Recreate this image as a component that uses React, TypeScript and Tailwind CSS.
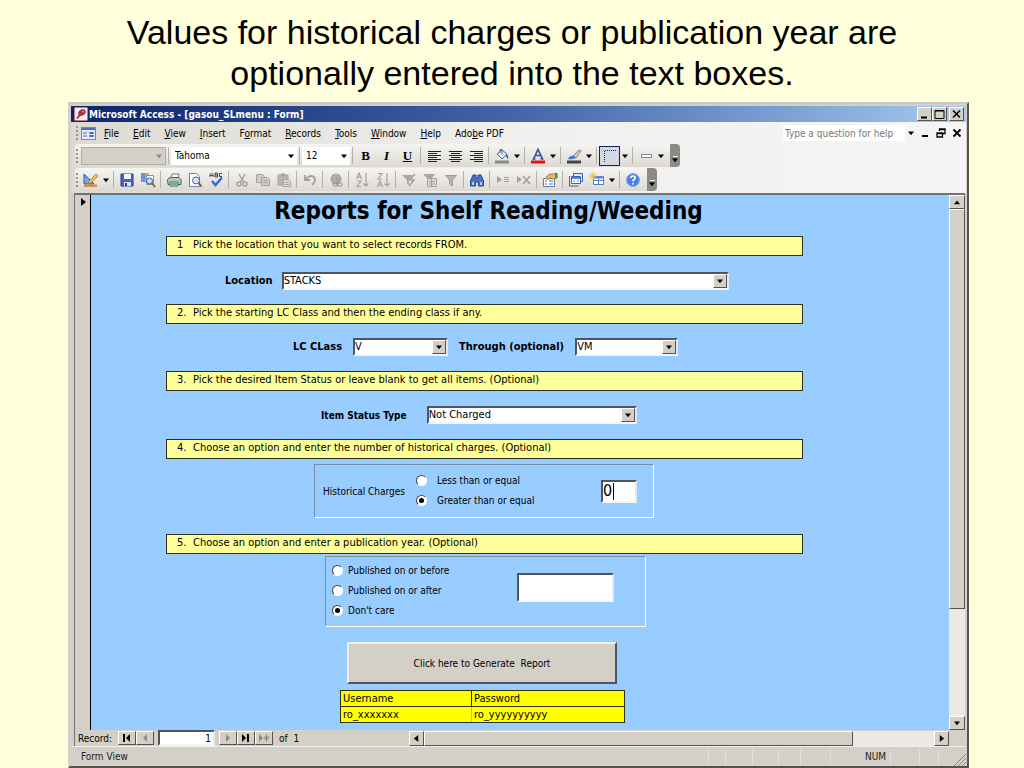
import type { ReactNode } from 'react';
import clsx from 'clsx';

const MENUS = [
  ['', 'F', 'ile'],
  ['', 'E', 'dit'],
  ['', 'V', 'iew'],
  ['', 'I', 'nsert'],
  ['F', 'o', 'rmat'],
  ['', 'R', 'ecords'],
  ['', 'T', 'ools'],
  ['', 'W', 'indow'],
  ['', 'H', 'elp'],
  ['Ado', 'b', 'e PDF'],
];

const RAISED = 'border border-t-white border-l-white border-r-[#55534e] border-b-[#55534e] bg-[#d4d0c8]';
const SUNKEN = 'border-2 border-t-[#4c5560] border-l-[#4c5560] border-r-[#e4e8ee] border-b-[#f4f6f8] bg-white';
const TRACK = 'bg-[#ebe9e4]';

function App() {
  return (
    <div className="min-h-screen bg-[#ffffdb] font-['DejaVu_Sans_Condensed','DejaVu_Sans',sans-serif] text-[10px] text-black">
      <h1 className="px-16 pt-3 pb-2 text-center font-['Liberation_Sans',sans-serif] text-[34px] leading-[41px]">
        Values for historical charges or publication year are
        <br />
        optionally entered into the text boxes.
      </h1>
      <div className="ml-[68px] mr-[55px] border-2 border-t-[#c9c9c4] border-l-[#d4d0c8] border-r-[#55534e] border-b-[#55534e] bg-[#d4d0c8] px-px pt-0.5">
        <TitleBar />
        <div className="bg-linear-to-r from-[#dddad3] via-[#f1f0ee] to-[#f5f5f5] pr-px pb-px pl-1">
          <MenuBar />
          <FormattingBar />
          <StandardBar />
        </div>
        <div className="ml-[3px] mr-px border-t-2 border-l border-[#6e7378]">
          <div className="flex">
            <div className="flex w-4 shrink-0 justify-center border-r border-black bg-[#d4d0c8] pt-[3px]">
              <Triangle dir="right" size={8} />
            </div>
            <ReportForm />
            <VerticalScroll />
          </div>
          <RecordBar />
        </div>
        <StatusBar />
      </div>
    </div>
  );
}

function Triangle({ dir, size = 6, color = '#000' }: { dir: 'up' | 'down' | 'left' | 'right'; size?: number; color?: string }) {
  const points = {
    up: '0,7 8,7 4,2',
    down: '0,2 8,2 4,7',
    left: '6,0 6,8 1,4',
    right: '2,0 2,8 7,4',
  }[dir];
  return (
    <svg width={size} height={size} viewBox="0 0 8 8" className="shrink-0">
      <polygon points={points} fill={color} />
    </svg>
  );
}

function TitleBar() {
  return (
    <div className="flex h-4 items-center bg-linear-to-r from-[#0a246a] via-[#4565a8] to-[#a6caf0] pr-0.5 pl-[3px]">
      <svg width="14" height="14" viewBox="0 0 14 14">
        <rect x="0.5" y="0.5" width="13" height="13" rx="1" fill="#f8e8ec" stroke="#b87888" />
        <ellipse cx="8" cy="5.500" rx="4" ry="3" transform="rotate(-35 8 5.500)" fill="#a83048" />
        <circle cx="9" cy="4.500" r="1" fill="#d88898" />
        <path d="M6.500 7 3 11.500" stroke="#a83048" strokeWidth="2" />
      </svg>
      <span className="ml-px grow text-[10px] font-bold text-white">Microsoft Access - [gasou_SLmenu : Form]</span>
      <WindowButton label="Minimize"><path d="M3 9.500h6" strokeWidth="2" /></WindowButton>
      <WindowButton label="Maximize"><path d="M2 2.500h9v8H2zM2 3h9" /></WindowButton>
      <WindowButton label="Close"><path d="m3 2.500 7 7m0-7-7 7" strokeWidth="1.600" /></WindowButton>
    </div>
  );
}

function WindowButton({ label, children }: { label: string; children: ReactNode }) {
  return (
    <button aria-label={label} className={clsx(RAISED, 'flex h-[14px] w-[15px] items-center justify-center last:ml-0.5')}>
      <svg width="13" height="12" viewBox="0 0 13 12" fill="none" stroke="#000">{children}</svg>
    </button>
  );
}

function MenuBar() {
  return (
    <div className="flex h-[22px] items-center">
      <Grip />
      <svg width="15" height="13" viewBox="0 0 15 13" className="mr-px ml-px">
        <rect x="0.5" y="0.5" width="14" height="12" fill="#e4ecfa" stroke="#6a86c4" />
        <path d="M1 1h13v2H1z" fill="#4a6cc0" />
        <path d="M2 6h4M2 9h4" stroke="#4a6cc0" />
        <path d="M8.500 5.500h4v1h-4zM8.500 8.500h4v1h-4z" fill="#fff" stroke="#4a6cc0" />
      </svg>
      {MENUS.map(([before, key, after]) => (
        <button key={key} className="px-[7px] whitespace-pre">
          {before}<span className="underline">{key}</span>{after}
        </button>
      ))}
      <span className="grow" />
      <input
        aria-label="Type a question for help"
        placeholder="Type a question for help"
        className="h-4 w-[122px] bg-white pl-0.5 placeholder:text-[#777]"
      />
      <span className="flex w-3 justify-center"><Triangle dir="down" /></span>
      <ChildButton label="Minimize form"><path d="M3 9h6" strokeWidth="2" /></ChildButton>
      <ChildButton label="Restore form"><path d="M4.500 4V2h5.500v4.500H8M4 2.500h6.500M2 6h5.500v4H2zM1.500 6.500h6.500" strokeWidth="1.300" /></ChildButton>
      <ChildButton label="Close form"><path d="m2.500 2.500 7 7m0-7-7 7" strokeWidth="1.800" /></ChildButton>
    </div>
  );
}

function ChildButton({ label, children }: { label: string; children: ReactNode }) {
  return (
    <button aria-label={label} className="flex w-4 justify-center">
      <svg width="12" height="12" viewBox="0 0 12 12" fill="none" stroke="#000">{children}</svg>
    </button>
  );
}

function Grip() {
  return (
    <svg width="5" height="16" viewBox="0 0 5 16" className="shrink-0">
      <path d="M2 1v14" stroke="#98958e" strokeWidth="2" strokeDasharray="2 2" />
    </svg>
  );
}

function Sep() {
  return (
    <span className="flex w-[5px] shrink-0 justify-center">
      <span className="h-[17px] w-px bg-[#b4b1aa]" />
    </span>
  );
}

function Drop({ label }: { label: string }) {
  return (
    <button aria-label={label} className="flex w-[10px] shrink-0 justify-center">
      <Triangle dir="down" />
    </button>
  );
}

function Tool({ label, pressed, children }: { label: string; pressed?: boolean; children: ReactNode }) {
  return (
    <button
      aria-label={label}
      className={clsx('flex h-5 w-[21px] shrink-0 items-center justify-center', pressed && 'border border-[#0a246a] bg-[#d3d8e4]')}
    >
      <svg width="16" height="16" viewBox="0 0 16 16" fill="none">{children}</svg>
    </button>
  );
}

function BarEnd() {
  return (
    <button aria-label="Toolbar options" className="ml-1 flex h-[23px] w-[10px] flex-col items-center justify-end rounded-r-sm bg-[#8c8a86] pb-1">
      <span className="h-px w-[5px] bg-white" />
      <Triangle dir="down" />
    </button>
  );
}

function BarSelect({ label, value, className }: { label: string; value: string; className: string }) {
  return (
    <div className={clsx('relative flex h-[18px] shrink-0', className)}>
      <select aria-label={label} disabled={!value} className="w-full appearance-none bg-transparent pl-1 opacity-100">
        <option>{value}</option>
      </select>
      <span className="pointer-events-none absolute inset-y-0 right-[3px] flex items-center">
        <Triangle dir="down" color={value ? '#000' : '#8c8a86'} />
      </span>
    </div>
  );
}

function Bar({ children }: { children: ReactNode }) {
  return (
    <div className="flex pb-px">
      <div className="flex h-[23px] items-center rounded-sm bg-linear-to-b from-[#f6f5f2] to-[#dcd9d2]">{children}</div>
    </div>
  );
}

function FormattingBar() {
  return (
    <Bar>
      <Grip />
      <BarSelect label="Object" value="" className="ml-px w-[85px] border border-[#b0ada6] bg-[#d4d0c8]" />
      <Sep />
      <BarSelect label="Font" value="Tahoma" className="w-[126px] bg-white" />
      <Sep />
      <BarSelect label="Font size" value="12" className="w-[48px] bg-white" />
      <Sep />
      <button aria-label="Bold" className="w-[21px] font-['Liberation_Serif',serif] text-[13px] font-bold">B</button>
      <button aria-label="Italic" className="w-[21px] font-['Liberation_Serif',serif] text-[13px] font-bold italic">I</button>
      <button aria-label="Underline" className="w-[21px] font-['Liberation_Serif',serif] text-[13px] font-bold underline">U</button>
      <Sep />
      <Tool label="Align left"><path d="M2 3.500h13M2 5.500h9M2 7.500h13M2 9.500h9M2 11.500h13M2 13.500h9" stroke="#222" /></Tool>
      <Tool label="Center"><path d="M2 3.500h13M4 5.500h9M2 7.500h13M4 9.500h9M2 11.500h13M4 13.500h9" stroke="#222" /></Tool>
      <Tool label="Align right"><path d="M2 3.500h13M6 5.500h9M2 7.500h13M6 9.500h9M2 11.500h13M6 13.500h9" stroke="#222" /></Tool>
      <Sep />
      <Tool label="Fill color">
        <path d="m3 6 5-4 5 4-5 5z" fill="#e4ecf8" stroke="#4a6a98" />
        <path d="M6 5V1.500h2V6" stroke="#4a6a98" />
        <path d="M12 6q3 1 2 5-2-1-2-5z" fill="#3a62b8" />
        <path d="M1 12.500h14v3H1z" fill="#8a8a8a" />
      </Tool>
      <Drop label="Fill colors" />
      <Sep />
      <Tool label="Font color">
        <path d="M3.500 11 8 1.500 12.500 11M5 7.500h6M2.500 11h3M10.500 11h3" stroke="#34549c" strokeWidth="1.700" />
        <path d="M1 12.500h14v3H1z" fill="#e81010" />
      </Tool>
      <Drop label="Font colors" />
      <Sep />
      <Tool label="Line color">
        <path d="m7 8 6-6 2 1-5 7z" fill="#e8c860" stroke="#7c86a8" />
        <path d="M2 11q2-4 6-3l2 2q-4 2-8 1z" fill="#4a78d0" />
        <path d="M1 12.500h14v3H1z" fill="#444" />
      </Tool>
      <Drop label="Line colors" />
      <Sep />
      <Tool label="Border width" pressed>
        <path d="M2.500 14V2.500H14" stroke="#222" strokeDasharray="1 1" />
      </Tool>
      <Drop label="Border widths" />
      <Sep />
      <Tool label="Special effect">
        <rect x="3.500" y="6.500" width="10" height="3" fill="#fff" stroke="#7c86a8" />
      </Tool>
      <Drop label="Special effects" />
      <BarEnd />
    </Bar>
  );
}

function StandardBar() {
  return (
    <Bar>
      <Grip />
      <Tool label="View">
        <path d="M1 2v10h10z" fill="#7aa4e8" stroke="#2a56b0" />
        <path d="m6 9 7-7 2 2-7 7-3 1z" fill="#f0c040" stroke="#9a6a20" strokeWidth=".7" />
        <path d="M1 12.500h13v2.500H1z" fill="#e09030" />
      </Tool>
      <Drop label="Views" />
      <Sep />
      <Tool label="Save">
        <path d="M2 2h12v12H2z" fill="#4a62c8" stroke="#26388c" />
        <path d="M5 2h7v5H5z" fill="#f4f6ff" />
        <path d="M5 10h7v4H5z" fill="#dde2f2" />
        <path d="M6 11h2v3H6z" fill="#26388c" />
      </Tool>
      <Tool label="File search">
        <path d="M1 1h4v9H1z" fill="#6a92dc" />
        <path d="M5 1h4v9H5z" fill="#e8a050" />
        <path d="M6.500 3.500h7v9h-7z" fill="#fff" stroke="#7a92c0" />
        <circle cx="9.500" cy="9" r="3" fill="#c8e0f8" stroke="#3c5c90" />
        <path d="m12 11 3 4" stroke="#b05a20" strokeWidth="2" />
      </Tool>
      <Sep />
      <Tool label="Print">
        <path d="m5 6 1-4h7l-1 4" fill="#fff" stroke="#6a7c98" />
        <path d="M1.500 7.500 4 5.500h9l2 2v5h-13z" fill="#b4c8c4" stroke="#48645c" />
        <path d="M4 10h8v4H4z" fill="#f8f8f8" stroke="#48645c" />
        <path d="M5 12h6" stroke="#30a050" strokeWidth="1.500" />
      </Tool>
      <Tool label="Print preview">
        <path d="M2.500 1.500h7l3 3v10h-10z" fill="#fff" stroke="#6a80ac" />
        <circle cx="9" cy="8.500" r="3.500" fill="#cfe4f8" stroke="#48689c" />
        <path d="m11.500 11 3 3.500" stroke="#a05828" strokeWidth="2" />
      </Tool>
      <Tool label="Spelling">
        <path d="M2 5V2.500L3.500 1 5 2.500V5M2 3.500h3M7 1v4h2.500V1zM7 3h2.500M14 1.500h-2.500v3H14" stroke="#333" strokeWidth=".9" />
        <path d="m4 9 3.500 4L14 5.500" stroke="#3a6ad8" strokeWidth="2.500" />
      </Tool>
      <Sep />
      <Tool label="Cut">
        <path d="m5 2 4.500 8M11 2 6.500 10" stroke="#a5a29c" strokeWidth="1.500" />
        <circle cx="5" cy="12" r="2" stroke="#a5a29c" strokeWidth="1.500" />
        <circle cx="11" cy="12" r="2" stroke="#a5a29c" strokeWidth="1.500" />
      </Tool>
      <Tool label="Copy">
        <path d="M1.500 2.500h6l2 2v6h-8z" fill="#d0cec8" stroke="#a5a29c" />
        <path d="M6.500 5.500h6l2 2v6h-8zM8 8.500h4M8 10.500h5" fill="#d0cec8" stroke="#a5a29c" />
      </Tool>
      <Tool label="Paste">
        <path d="M2 3h10v10H2z" fill="#b8b5ae" stroke="#a5a29c" />
        <path d="M5 1.500h4v3H5z" fill="#a5a29c" />
        <path d="M7.500 7.500h5l2 2v5h-7zM9 10.500h4M9 12.500h4" fill="#e0ded8" stroke="#a5a29c" />
      </Tool>
      <Sep />
      <Tool label="Undo">
        <path d="M3 3v5h5M3.500 7.500Q8 2 12 5q3 3-2 8" stroke="#a5a29c" strokeWidth="1.800" />
      </Tool>
      <Sep />
      <Tool label="Insert hyperlink">
        <circle cx="8" cy="7" r="5.500" fill="#aaa7a1" />
        <path d="M4 5q4-3 8 0M8 2q-3 5 0 10" stroke="#bcb9b3" />
        <rect x="5" y="11" width="5" height="3" rx="1.500" stroke="#8e8b85" />
        <rect x="9" y="11" width="5" height="3" rx="1.500" stroke="#8e8b85" />
      </Tool>
      <Sep />
      <Tool label="Sort ascending">
        <path d="M2.500 7 5 1l2.500 6M3.500 5h3M3 9h4l-4 5.500h4M12 1v13M9.500 11.500 12 14l2.500-2.500" stroke="#a5a29c" strokeWidth="1.200" />
      </Tool>
      <Tool label="Sort descending">
        <path d="M3 1.500h4L3 7h4M2.500 15 5 9l2.500 6M3.500 13h3M12 1v13M9.500 11.500 12 14l2.500-2.500" stroke="#a5a29c" strokeWidth="1.200" />
      </Tool>
      <Sep />
      <Tool label="Filter by selection">
        <path d="M1 3h11L8 8v5l-2-1V8z" fill="#aaa7a1" />
        <path d="m14 2-5 6h4l-5 6" stroke="#a5a29c" strokeWidth="1.500" />
      </Tool>
      <Tool label="Filter by form">
        <path d="M1 2h12L9 7v4H6V7z" fill="#aaa7a1" />
        <path d="M5.500 6.500h9v8h-9zM7 9.500h6M7 12h6M9.500 7v7" fill="#dddbd5" stroke="#a5a29c" />
      </Tool>
      <Tool label="Apply filter">
        <path d="M2.500 3.500h11L9.500 8v6l-3-2V8z" fill="#b8b5ae" stroke="#a09d97" />
      </Tool>
      <Sep />
      <Tool label="Find">
        <path d="M4 3h3v3h2V3h3l2.500 6v5H9.500v-4h-3v4h-5V9z" fill="#4a72c4" stroke="#28468c" />
        <path d="M3 10h2v3H3zM11 10h2v3h-2z" fill="#b4ccf4" />
      </Tool>
      <Sep />
      <Tool label="New record">
        <path d="m2 4 5 3.500L2 11z" fill="#a5a29c" />
        <path d="M9 5.500h5M9 7.500h5M9 9.500h5" stroke="#a5a29c" />
      </Tool>
      <Tool label="Delete record">
        <path d="m1 4 5 3.500L1 11z" fill="#a5a29c" />
        <path d="m7 4 7 8m0-8-7 8" stroke="#a5a29c" strokeWidth="1.800" />
      </Tool>
      <Sep />
      <Tool label="Properties">
        <path d="M1.500 6.500h11v8h-11z" fill="#fff" stroke="#68809c" />
        <path d="M3 9h2M7 9h4M3 12h2M7 12h4" stroke="#4a6cc0" />
        <path d="M4 5q3-4 7-3l3-1 1 5-4 1-3-1-2 2z" fill="#e8b860" stroke="#8c6430" strokeWidth=".7" />
        <path d="M13 1h2.500v5L13 6.500z" fill="#38a048" />
      </Tool>
      <Sep />
      <Tool label="Database window">
        <path d="M5.500 1.500h9v8h-9z" fill="#dce8fc" stroke="#3c62b4" />
        <path d="M1.500 4v10h9" stroke="#3c62b4" />
        <path d="M3.500 4.500h9v7h-9z" fill="#fff" stroke="#3c62b4" />
        <path d="M4 5h8v2H4z" fill="#5a86dc" />
        <path d="M5 9h2M9 9h2" stroke="#5a86dc" />
      </Tool>
      <Tool label="New object">
        <path d="M4.500 4.500h10v8h-10zM5 8.500h9M9.500 6v6" fill="#fff" stroke="#5a7cc0" />
        <path d="M5 4h9v2.500H5z" fill="#5a86dc" />
        <path d="M4 0v8M0 4h8M1 1l6 6M7 1 1 7" stroke="#f0c030" />
      </Tool>
      <Drop label="New objects" />
      <Sep />
      <Tool label="Help">
        <circle cx="8" cy="8" r="6.500" fill="#4a82e0" stroke="#8cacdc" />
        <path d="M5.800 6Q6 4 8 4t2.200 2Q10 7.500 8 8.200V9.500M8 11v1.500" stroke="#fff" strokeWidth="1.700" />
      </Tool>
      <BarEnd />
    </Bar>
  );
}

function Banner({ no, children }: { no: string; children: ReactNode }) {
  return (
    <h3 className="flex h-5 w-full border border-[#2c3020] bg-[#ffff99] pl-[10px] text-[11px] leading-[15px]">
      <span className="w-4">{no}</span>
      <span>{children}</span>
    </h3>
  );
}

function Combo({ id, value, className }: { id: string; value: string; className: string }) {
  return (
    <div className={clsx('relative flex h-[18px] shrink-0', className)}>
      <select id={id} className={clsx(SUNKEN, 'w-full appearance-none text-[11px] leading-[14px]')}>
        <option>{value}</option>
      </select>
      <span className={clsx(RAISED, 'pointer-events-none absolute inset-y-0.5 right-0.5 flex w-[14px] items-center justify-center')}>
        <Triangle dir="down" />
      </span>
    </div>
  );
}

function Choice({ name, label, checked, className }: { name: string; label: string; checked?: boolean; className: string }) {
  return (
    <label className={clsx('flex h-5 items-center', className)}>
      <input
        type="radio"
        name={name}
        defaultChecked={checked}
        className="flex size-[11px] appearance-none items-center justify-center rounded-full border border-t-[#3c4650] border-r-white border-b-white border-l-[#3c4650] bg-white before:size-[5px] before:rounded-full checked:before:bg-black"
      />
      {label}
    </label>
  );
}

function ReportForm() {
  return (
    <form className="min-w-0 grow bg-[#99ccff] pb-[7px] pl-[75px]" onSubmit={(e) => e.preventDefault()}>
      <div className="flex w-full max-w-[637px] flex-col">
        <h2 className="h-[41px] pl-2 text-center text-[24px] leading-[32px] font-bold">Reports for Shelf Reading/Weeding</h2>

        <Banner no="1">Pick the location that you want to select records FROM.</Banner>
        <div className="flex h-12 items-center gap-[9px] pt-0.5 pl-[59px] text-[11px] font-bold">
          <label htmlFor="location">Location</label>
          <Combo id="location" value="STACKS" className="w-[447px] font-normal" />
        </div>

        <Banner no="2.">Pick the starting LC Class and then the ending class if any.</Banner>
        <div className="flex h-[47px] items-center gap-[11px] pb-px pl-[127px] text-[11px] font-bold">
          <label htmlFor="lc-start">LC CLass</label>
          <Combo id="lc-start" value="V" className="w-[95px] font-normal" />
          <label htmlFor="lc-end">Through (optional)</label>
          <Combo id="lc-end" value="VM" className="w-[103px] font-normal" />
        </div>

        <Banner no="3.">Pick the desired Item Status or leave blank to get all items. (Optional)</Banner>
        <div className="flex h-12 items-center gap-5 pl-[155px] text-[10px] font-bold">
          <label htmlFor="item-status">Item Status Type</label>
          <Combo id="item-status" value="Not Charged" className="w-[210px] font-normal" />
        </div>

        <Banner no="4.">Choose an option and enter the number of historical charges. (Optional)</Banner>
        <div className="flex h-[75px] pt-[5px] pl-[148px]">
          <fieldset className="flex h-[54px] w-[340px] items-center border border-t-[#7c8ea4] border-r-white border-b-white border-l-[#7c8ea4] pr-4 pl-2">
            <span className="w-[93px]">Historical Charges</span>
            <div className="grow pb-px">
              <Choice name="charges" label="Less than or equal" className="gap-[10px]" />
              <Choice name="charges" label="Greater than or equal" className="gap-[10px]" checked />
            </div>
            <div className="relative flex">
              <input aria-label="Number of historical charges" defaultValue="0" className={clsx(SUNKEN, 'h-[23px] w-9 text-[16px]')} />
              <span className="absolute top-[3px] left-3 h-[17px] w-px bg-black" />
            </div>
          </fieldset>
        </div>

        <Banner no="5.">Choose an option and enter a publication year. (Optional)</Banner>
        <div className="flex pt-0.5 pl-[159px]">
          <fieldset className="flex h-[71px] w-[321px] items-center border border-t-[#7c8ea4] border-r-white border-b-white border-l-[#7c8ea4] pr-[31px] pl-[6px]">
            <div className="grow pb-0.5">
              <Choice name="published" label="Published on or before" className="gap-[5px]" />
              <Choice name="published" label="Published on or after" className="gap-[5px]" />
              <Choice name="published" label="Don't care" className="gap-[5px]" checked />
            </div>
            <input aria-label="Publication year" className={clsx(SUNKEN, 'mb-2 h-[29px] w-[97px] text-[16px]')} />
          </fieldset>
        </div>

        <div className="flex pt-[15px] pl-[181px]">
          <button className="h-[42px] w-[270px] border-2 border-t-[#f0eee8] border-r-[#4c5560] border-b-[#4c5560] border-l-[#f0eee8] bg-[#d4d0c8] whitespace-pre">
            Click here to Generate  Report
          </button>
        </div>
        <div className="pt-[6px] pl-[174px]">
          <table className="w-[285px] border-collapse bg-[#ffff00] text-left text-[11px] leading-[15px]">
            <thead>
              <tr>
                <th className="w-[131px] border border-[#303000] pl-0.5 font-normal">Username</th>
                <th className="border border-[#303000] pl-0.5 font-normal">Password</th>
              </tr>
            </thead>
            <tbody>
              <tr>
                <td className="border border-r-[#c8c830] border-[#303000] pl-0.5">ro_xxxxxxx</td>
                <td className="border border-l-[#c8c830] border-[#303000] pl-0.5">ro_yyyyyyyyyy</td>
              </tr>
            </tbody>
          </table>
        </div>
      </div>
    </form>
  );
}

function VerticalScroll() {
  return (
    <div className={clsx(TRACK, 'flex w-4 shrink-0 flex-col')}>
      <button aria-label="Scroll up" className={clsx(RAISED, 'flex h-[14px] items-center justify-center')}>
        <Triangle dir="up" />
      </button>
      <div className={clsx(RAISED, 'h-[400px]')} />
      <span className="grow" />
      <button aria-label="Scroll down" className={clsx(RAISED, 'flex h-[14px] items-center justify-center')}>
        <Triangle dir="down" />
      </button>
    </div>
  );
}

function NavButton({ label, children }: { label: string; children: ReactNode }) {
  return (
    <button aria-label={label} className={clsx(RAISED, 'flex h-[14px] w-[18px] items-center justify-center')}>
      <svg width="12" height="8" viewBox="0 0 12 8">{children}</svg>
    </button>
  );
}

function RecordBar() {
  return (
    <div className="flex h-4 items-center bg-[#d4d0c8] pl-[3px]">
      <label htmlFor="record" className="w-[40px]">Record:</label>
      <NavButton label="First record"><path d="M2 0h2v8H2zM9 0v8L5 4z" /></NavButton>
      <NavButton label="Previous record"><path d="M8 0v8L4 4z" fill="#8c8a86" /></NavButton>
      <input id="record" defaultValue="1" className={clsx(SUNKEN, 'mx-1 h-4 w-[57px] pr-0.5 text-right')} />
      <NavButton label="Next record"><path d="M4 0v8l4-4z" fill="#8c8a86" /></NavButton>
      <NavButton label="Last record"><path d="M2 0v8l4-4zM7 0h2v8H7z" /></NavButton>
      <NavButton label="New record">
        <path d="M1 0v8l4-4z" fill="#8c8a86" />
        <path d="M8.500 0v8M5.500 4h6M6.500 2l4 4M10.500 2l-4 4" stroke="#8c8a86" />
      </NavButton>
      <span className="w-[136px] pl-[6px] whitespace-pre">of  1</span>
      <div className={clsx(TRACK, 'flex h-[15px] grow')}>
        <button aria-label="Scroll left" className={clsx(RAISED, 'flex w-[15px] items-center justify-center')}>
          <Triangle dir="left" size={7} />
        </button>
        <div className={clsx(RAISED, 'w-[429px]')} />
        <span className="grow" />
        <button aria-label="Scroll right" className={clsx(RAISED, 'flex w-[15px] items-center justify-center')}>
          <Triangle dir="right" size={7} />
        </button>
      </div>
      <span className="w-4" />
    </div>
  );
}

function StatusBar() {
  return (
    <div className="flex h-5 items-center border-t border-[#f2f0ea] pl-[10px] text-[#222]">
      <span className="grow">Form View</span>
      <span className="h-4 w-[17px] border-l border-[#e2dfd8]" />
      <span className="h-4 w-[27px] border-l border-[#e2dfd8]" />
      <span className="h-4 w-[26px] border-l border-[#e2dfd8]" />
      <span className="h-4 w-[22px] border-l border-[#e2dfd8]" />
      <span className="h-4 w-[30px] border-l border-[#e2dfd8]" />
      <span className="flex h-4 w-[60px] items-center justify-end border-l border-[#e2dfd8] pr-1">NUM</span>
      <span className="h-4 w-[29px] border-l border-[#e2dfd8]" />
      <span className="h-4 w-[19px] border-l border-[#e2dfd8]" />
      <span className="h-4 w-[15px] border-l border-[#e2dfd8]" />
      <svg width="13" height="13" viewBox="0 0 13 13" className="self-end">
        <path d="M1 13 13 1M5 13l8-8M9 13l4-4" stroke="#8c8a86" />
      </svg>
    </div>
  );
}

export default App;
